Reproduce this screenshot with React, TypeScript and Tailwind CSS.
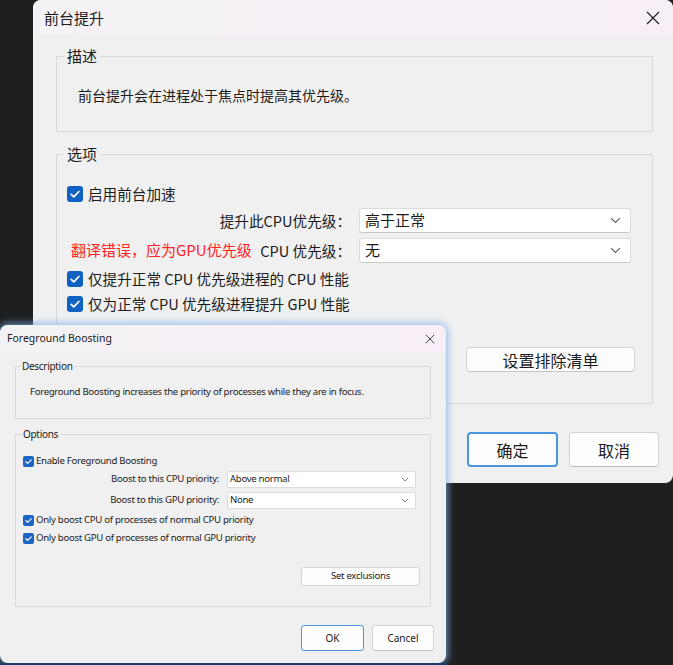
const CJK = "font-['Microsoft_YaHei','Noto_Sans_CJK_SC',sans-serif]";
const LAT = "font-['Segoe_UI','Noto_Sans',sans-serif]";

function CloseX({ size }: { size: number }) {
  return (
    <svg width={size} height={size} viewBox="0 0 14 14" className="shrink-0">
      <path d="M1 1L13 13M13 1L1 13" stroke="#1b1b1b" strokeWidth="1.1" fill="none" />
    </svg>
  );
}

function Chevron({ w }: { w: number }) {
  return (
    <svg width={w} height={w * 0.6} viewBox="0 0 10 6" className="shrink-0">
      <path d="M1 1L5 5L9 1" stroke="#606060" strokeWidth="1" fill="none" />
    </svg>
  );
}

function Tick({ big }: { big?: boolean }) {
  return (
    <span
      className={
        big
          ? "flex h-4 w-4 shrink-0 items-center justify-center rounded-[3px] bg-[#0f62c1]"
          : "flex h-[11px] w-[11px] shrink-0 items-center justify-center rounded-[2px] bg-[#1a66c4]"
      }
    >
      <svg viewBox="0 0 16 16" className="h-full w-full">
        <path d="M4.2 8.3L6.8 10.8L11.9 5.5" stroke="white" strokeWidth="1.7" fill="none" strokeLinecap="round" strokeLinejoin="round" />
      </svg>
    </span>
  );
}

function ChineseDialog() {
  return (
    <div className={`absolute left-[33px] top-0 flex h-[483px] w-[640px] flex-col overflow-hidden rounded-lg bg-[#f0f0f0] text-[#1b1b1b] ${CJK}`}>
      <div className="flex h-[35px] shrink-0 items-center justify-between bg-gradient-to-r from-[#f3f2f4] to-[#f8eef8] pl-[11px] pr-[13px]">
        <span className="text-[15px] leading-none">前台提升</span>
        <CloseX size={14} />
      </div>

      <div className="flex flex-col pl-[23px] pr-[20px] pt-[11px]">
        <fieldset className="border border-[#dadada] pb-[26px] pl-[21px] pt-[19px]">
          <legend className="-ml-[14px] px-[3px] text-[15px] leading-[20px]">描述</legend>
          <p className="text-[14px] leading-[20px]">前台提升会在进程处于焦点时提高其优先级。</p>
        </fieldset>

        <fieldset className="mt-[12px] border border-[#dadada] pb-[31px] pl-[10px] pr-[17px] pt-[18px] text-[14.6px]">
          <legend className="-ml-[3px] px-[3px] text-[15px] leading-[20px]">选项</legend>

          <label className="flex h-6 items-center gap-[5px] whitespace-nowrap">
            <Tick big />
            启用前台加速
          </label>

          <div className="mr-[4px] mt-[2px] flex h-[25px] items-center justify-end gap-2 whitespace-nowrap">
            <span>提升此CPU优先级：</span>
            <div className="flex h-[25px] w-[272px] shrink-0 items-center justify-between rounded-[3px] border border-[#dcdcdc] border-b-[#c8c8c8] bg-white pl-[5px] pr-[9px] text-[15px]">
              <span>高于正常</span>
              <Chevron w={11} />
            </div>
          </div>

          <div className="mr-[4px] mt-[5px] flex h-[25px] items-center gap-2 whitespace-nowrap">
            <span className="ml-[4px] text-[15px] text-[#ff2424]">翻译错误，应为GPU优先级</span>
            <span className="ml-auto">CPU 优先级：</span>
            <div className="flex h-[25px] w-[272px] shrink-0 items-center justify-between rounded-[3px] border border-[#dcdcdc] border-b-[#c8c8c8] bg-white pl-[5px] pr-[9px] text-[15px]">
              <span>无</span>
              <Chevron w={11} />
            </div>
          </div>

          <label className="mt-[4px] flex h-6 items-center gap-[5px] whitespace-nowrap">
            <Tick big />
            仅提升正常 CPU 优先级进程的 CPU 性能
          </label>
          <label className="mt-[1px] flex h-6 items-center gap-[5px] whitespace-nowrap">
            <Tick big />
            仅为正常 CPU 优先级进程提升 GPU 性能
          </label>

          <div className="mt-[31px] flex justify-end">
            <button className="flex h-[25px] w-[169px] items-center justify-center rounded-[4px] border border-[#d4d4d4] border-b-[#c4c4c4] bg-[#fdfdfd] text-[16px]">
              设置排除清单
            </button>
          </div>
        </fieldset>
      </div>

      <div className="mt-[28px] flex justify-end gap-[11px] pr-[14px]">
        <button className="flex h-[35px] w-[91px] items-center justify-center rounded-[4px] border-2 border-[#4a94e0] bg-[#fdfdfd] text-[16px]">
          确定
        </button>
        <button className="flex h-[35px] w-[90px] items-center justify-center rounded-[4px] border border-[#d4d4d4] border-b-[#bdbdbd] bg-[#fdfdfd] text-[16px]">
          取消
        </button>
      </div>
    </div>
  );
}

function EnglishDialog() {
  return (
    <div className={`absolute left-0 top-[325px] flex h-[338px] w-[446px] flex-col overflow-hidden rounded-lg bg-[#f0f0f0] text-[#1b1b1b] shadow-[0_0_7px_2px_rgba(120,175,235,0.75)] ${LAT}`}>
      <div className="flex h-[27px] shrink-0 items-center justify-between bg-gradient-to-r from-[#f3f2f4] to-[#f8eef8] pl-[7px] pr-[11px]">
        <span className="text-[10.5px] leading-none">Foreground Boosting</span>
        <CloseX size={10} />
      </div>

      <div className="flex flex-col px-[15px] pt-[7px] text-[9.6px] tracking-[-0.3px]">
        <fieldset className="border border-[#dadada] pb-[19px] pl-[14px] pt-[12px]">
          <legend className="-ml-[10px] px-[2px] text-[10px] leading-[14px]">Description</legend>
          <p className="leading-[14px]">
            Foreground Boosting increases the priority of processes while they are in focus.
          </p>
        </fieldset>

        <fieldset className="mt-[8px] border border-[#dadada] pb-[20px] pl-[7px] pr-[10px] pt-[12px]">
          <legend className="-ml-[2px] px-[2px] text-[10px] leading-[14px]">Options</legend>

          <label className="flex h-4 items-center gap-[2px] whitespace-nowrap">
            <Tick />
            Enable Foreground Boosting
          </label>

          <div className="mr-[4px] mt-[2px] flex h-[17px] items-center justify-end gap-2 whitespace-nowrap">
            <span>Boost to this CPU priority:</span>
            <div className="flex h-[17px] w-[189px] shrink-0 items-center justify-between rounded-[2px] border border-[#dcdcdc] bg-white pl-[2px] pr-[6px]">
              <span>Above normal</span>
              <Chevron w={8} />
            </div>
          </div>
          <div className="mr-[4px] mt-[4px] flex h-[17px] items-center justify-end gap-2 whitespace-nowrap">
            <span>Boost to this GPU priority:</span>
            <div className="flex h-[17px] w-[189px] shrink-0 items-center justify-between rounded-[2px] border border-[#dcdcdc] bg-white pl-[2px] pr-[6px]">
              <span>None</span>
              <Chevron w={8} />
            </div>
          </div>

          <label className="mt-[3px] flex h-4 items-center gap-[2px] whitespace-nowrap">
            <Tick />
            Only boost CPU of processes of normal CPU priority
          </label>
          <label className="mt-[2px] flex h-4 items-center gap-[2px] whitespace-nowrap">
            <Tick />
            Only boost GPU of processes of normal GPU priority
          </label>

          <div className="mt-[21px] flex justify-end">
            <button className="flex h-[19px] w-[119px] items-center justify-center rounded-[3px] border border-[#d4d4d4] bg-[#fdfdfd]">
              Set exclusions
            </button>
          </div>
        </fieldset>
      </div>

      <div className="mt-[18px] flex justify-end gap-[8px] pr-[12px] text-[10px]">
        <button className="flex h-[26px] w-[63px] items-center justify-center rounded-[3px] border border-[#4a94e0] bg-[#fdfdfd]">
          OK
        </button>
        <button className="flex h-[26px] w-[62px] items-center justify-center rounded-[3px] border border-[#d4d4d4] border-b-[#c0c0c0] bg-[#fdfdfd]">
          Cancel
        </button>
      </div>
    </div>
  );
}

export default function App() {
  return (
    <div className="relative h-[665px] w-[673px] overflow-hidden bg-[#1f1f1f]">
      <ChineseDialog />
      <EnglishDialog />
      <div className="absolute bottom-0 left-0 h-[2px] w-[447px] bg-[#1c3e6e]" />
    </div>
  );
}
